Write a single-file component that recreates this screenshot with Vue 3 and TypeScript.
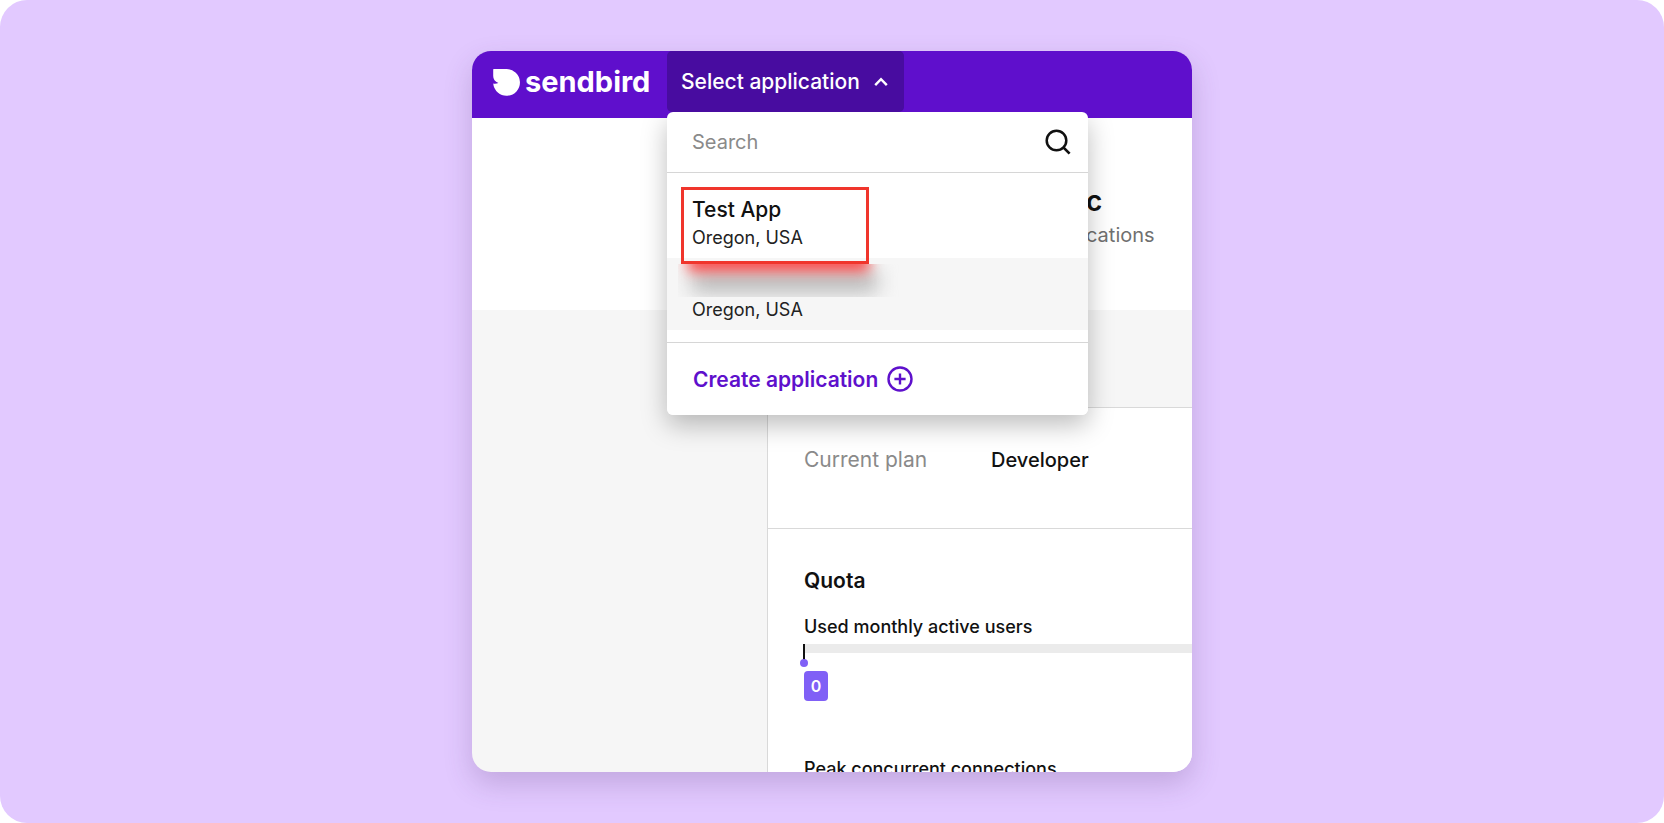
<script setup lang="ts">
import { ref } from 'vue'

interface Application {
  name: string
  region: string
  redacted: boolean
}

const query = ref('')
const used = ref(0)
const applications: Application[] = [
  { name: 'Test App', region: 'Oregon, USA', redacted: false },
  { name: '', region: 'Oregon, USA', redacted: true },
]
</script>

<template>
  <div class="stage">
    <main class="window">
      <header class="topbar">
        <a class="brand" href="#">
          <svg class="brand-mark" viewBox="0 0 27 27" aria-hidden="true">
            <path d="M0.6 0H13.4A13.4 13.4 0 1 1 0.2 14.6Q2.8 15.2 5.4 14Q0.2 12 0.2 7V0.4Q0.2 0 0.6 0Z" fill="#fff" />
          </svg>
          <span class="brand-name">sendbird</span>
        </a>
        <nav class="picker">
          <button class="picker-toggle" type="button" aria-expanded="true">
            <span>Select application</span>
            <svg class="chevron" viewBox="0 0 14 10" aria-hidden="true">
              <path d="M1.2 8.2L7 2.2L12.8 8.2" fill="none" stroke="#fff" stroke-width="2.4" />
            </svg>
          </button>
          <section class="menu">
            <div class="search">
              <input v-model="query" type="text" placeholder="Search" aria-label="Search" />
              <svg class="lens" viewBox="0 0 26 26" aria-hidden="true">
                <circle cx="11.5" cy="11.5" r="9.8" fill="none" stroke="#111" stroke-width="2.5" />
                <path d="M18.6 18.6L24.6 24.6" stroke="#111" stroke-width="2.7" />
              </svg>
            </div>
            <ul class="apps">
              <li v-for="(app, i) in applications" :key="i">
                <button class="app" :class="{ shaded: app.redacted }" type="button">
                  <strong v-if="!app.redacted">{{ app.name }}</strong>
                  <span v-else class="redaction"></span>
                  <span class="region">{{ app.region }}</span>
                  <span v-if="!app.redacted" class="marker"></span>
                </button>
              </li>
            </ul>
            <button class="create" type="button">
              <span>Create application</span>
              <svg class="plus" viewBox="0 0 26 26" aria-hidden="true">
                <circle cx="13" cy="13" r="11.5" fill="none" stroke="#5e10cc" stroke-width="2.4" />
                <path d="M13 7.4V18.6M7.4 13H18.6" stroke="#5e10cc" stroke-width="2.4" />
              </svg>
            </button>
          </section>
        </nav>
      </header>

      <section class="intro">
        <h1>c</h1>
        <p>cations</p>
      </section>

      <div class="content">
        <section class="panel">
          <dl class="plan">
            <dt>Current plan</dt>
            <dd>Developer</dd>
          </dl>
          <div class="quota">
            <h2>Quota</h2>
            <h3>Used monthly active users</h3>
            <div class="track">
              <span class="pin"></span>
            </div>
            <span class="count">{{ used }}</span>
            <h3 class="next">Peak concurrent connections</h3>
          </div>
        </section>
      </div>
    </main>
  </div>
</template>

<style scoped>
.stage {
  box-sizing: border-box;
  height: 100vh;
  padding: 51px 16px;
  display: flex;
  justify-content: center;
  border-radius: 27px;
  background: #e2c9ff;
  font-family: Inter, "Liberation Sans", sans-serif;
  color: #111;
}
.window {
  width: 100%;
  max-width: 720px;
  display: flex;
  flex-direction: column;
  overflow: hidden;
  border-radius: 19px;
  background: #f6f6f6;
  box-shadow: 0 12px 28px rgba(80, 50, 110, 0.22);
}
button {
  border: 0;
  margin: 0;
  background: none;
  font: inherit;
  color: inherit;
  text-align: left;
  cursor: pointer;
}
.topbar {
  position: relative;
  z-index: 1;
  flex: none;
  display: flex;
  align-items: flex-start;
  height: 67px;
  background: #5f0fcc;
}
.brand {
  box-sizing: border-box;
  width: 195px;
  height: 62px;
  padding-left: 21px;
  display: flex;
  align-items: center;
  gap: 5px;
  color: #fff;
  text-decoration: none;
}
.brand-mark {
  flex: none;
  width: 27px;
  height: 27px;
}
.brand-name {
  font-size: 29px;
  line-height: 32px;
  font-weight: 700;
}
.picker {
  position: relative;
}
.picker-toggle {
  display: flex;
  align-items: center;
  gap: 14px;
  height: 61px;
  padding: 0 16px 0 14px;
  border-radius: 5px;
  background: #480ca0;
  color: #fff;
  font-size: 21px;
  font-weight: 500;
  white-space: nowrap;
}
.chevron {
  width: 14px;
  height: 10px;
}
.menu {
  position: absolute;
  top: 61px;
  left: 0;
  width: 421px;
  overflow: hidden;
  border-radius: 6px;
  background: #fff;
}
/* The menu's shadow starts below the top bar. */
.picker::before {
  content: "";
  position: absolute;
  top: 61px;
  left: 0;
  width: 421px;
  height: 303px;
  border-radius: 6px;
  box-shadow: 0 10px 26px rgba(0, 0, 0, 0.26);
  clip-path: inset(6px -60px -60px -60px);
}
.search {
  display: flex;
  align-items: center;
  height: 60px;
  padding: 0 17px 0 25px;
  border-bottom: 1px solid #d6d6d6;
}
.search input {
  flex: 1;
  min-width: 0;
  padding: 0;
  border: 0;
  outline: 0;
  background: none;
  font: 400 20px/28px Inter, "Liberation Sans", sans-serif;
}
.search input::placeholder {
  color: #8a8a8a;
  opacity: 1;
}
.lens {
  width: 26px;
  height: 26px;
}
.apps {
  list-style: none;
  margin: 0;
  padding: 13px 0 12px;
  border-bottom: 1px solid #d6d6d6;
}
.app {
  position: relative;
  display: flex;
  flex-direction: column;
  width: 100%;
  padding: 10px 25px 6px;
  line-height: 28px;
}
.app strong {
  font-size: 21px;
  font-weight: 500;
}
.region {
  font-size: 18px;
  color: #222;
}
.shaded {
  background: #f6f6f6;
}
.marker {
  position: absolute;
  z-index: 2;
  top: 1px;
  left: 14px;
  box-sizing: border-box;
  width: 188px;
  height: 77px;
  border: 3px solid #f0352c;
}
.redaction {
  position: relative;
  height: 33px;
  margin: -4px 160px -1px -14px;
  overflow: hidden;
}
.redaction::before,
.redaction::after {
  content: "";
  position: absolute;
}
.redaction::before {
  inset: 8px 26px 6px 14px;
  background: #b0b0b0;
  filter: blur(10px);
}
.redaction::after {
  inset: -10px 34px 26px 10px;
  background: rgba(255, 32, 32, 0.85);
  filter: blur(7px);
}
.create {
  display: flex;
  align-items: center;
  gap: 9px;
  width: 100%;
  height: 72px;
  padding: 0 26px;
  color: #5e10cc;
  font-size: 21px;
  font-weight: 600;
}
.plus {
  width: 26px;
  height: 26px;
}
.intro {
  flex: none;
  padding: 67px 0 59px 614px;
  background: #fff;
}
.intro h1,
.intro p {
  margin: 0;
  line-height: 32px;
}
.intro h1 {
  margin-bottom: 2px;
  font-size: 28px;
  font-weight: 600;
}
.intro p {
  font-size: 20px;
  color: #707070;
}
.content {
  flex: 1;
  min-height: 0;
  padding: 97px 0 0 295px;
}
.panel {
  height: 100%;
  border-top: 1px solid #d9d9d9;
  border-left: 1px solid #d9d9d9;
  background: #fff;
}
.plan {
  display: flex;
  box-sizing: border-box;
  height: 121px;
  margin: 0;
  padding: 38px 36px 0;
  border-bottom: 1px solid #d9d9d9;
  font-size: 21px;
  line-height: 28px;
}
.plan dt {
  width: 187px;
  color: #8a8a8a;
}
.plan dd {
  margin: 0;
  font-size: 20px;
  font-weight: 500;
}
.quota {
  padding: 38px 0 0 36px;
}
.quota h2,
.quota h3 {
  margin: 0;
  line-height: 28px;
}
.quota h2 {
  margin-bottom: 18px;
  font-size: 21px;
  font-weight: 600;
}
.quota h3 {
  font-size: 18px;
  font-weight: 500;
}
.track {
  position: relative;
  height: 9px;
  margin-top: 3px;
  background: #ebebeb;
}
.pin {
  position: absolute;
  top: 0;
  left: -1px;
  width: 2px;
  height: 17px;
  background: #111;
}
.pin::after {
  content: "";
  position: absolute;
  top: 15px;
  left: -3px;
  width: 8px;
  height: 8px;
  border-radius: 50%;
  background: #8060f6;
}
.count {
  display: block;
  width: 24px;
  margin-top: 18px;
  border-radius: 4px;
  background: #8060f6;
  color: #fff;
  font-size: 16px;
  font-weight: 600;
  line-height: 30px;
  text-align: center;
}
.quota .next {
  margin-top: 54px;
}
</style>

<style>
body {
  background: #fff;
}
</style>
